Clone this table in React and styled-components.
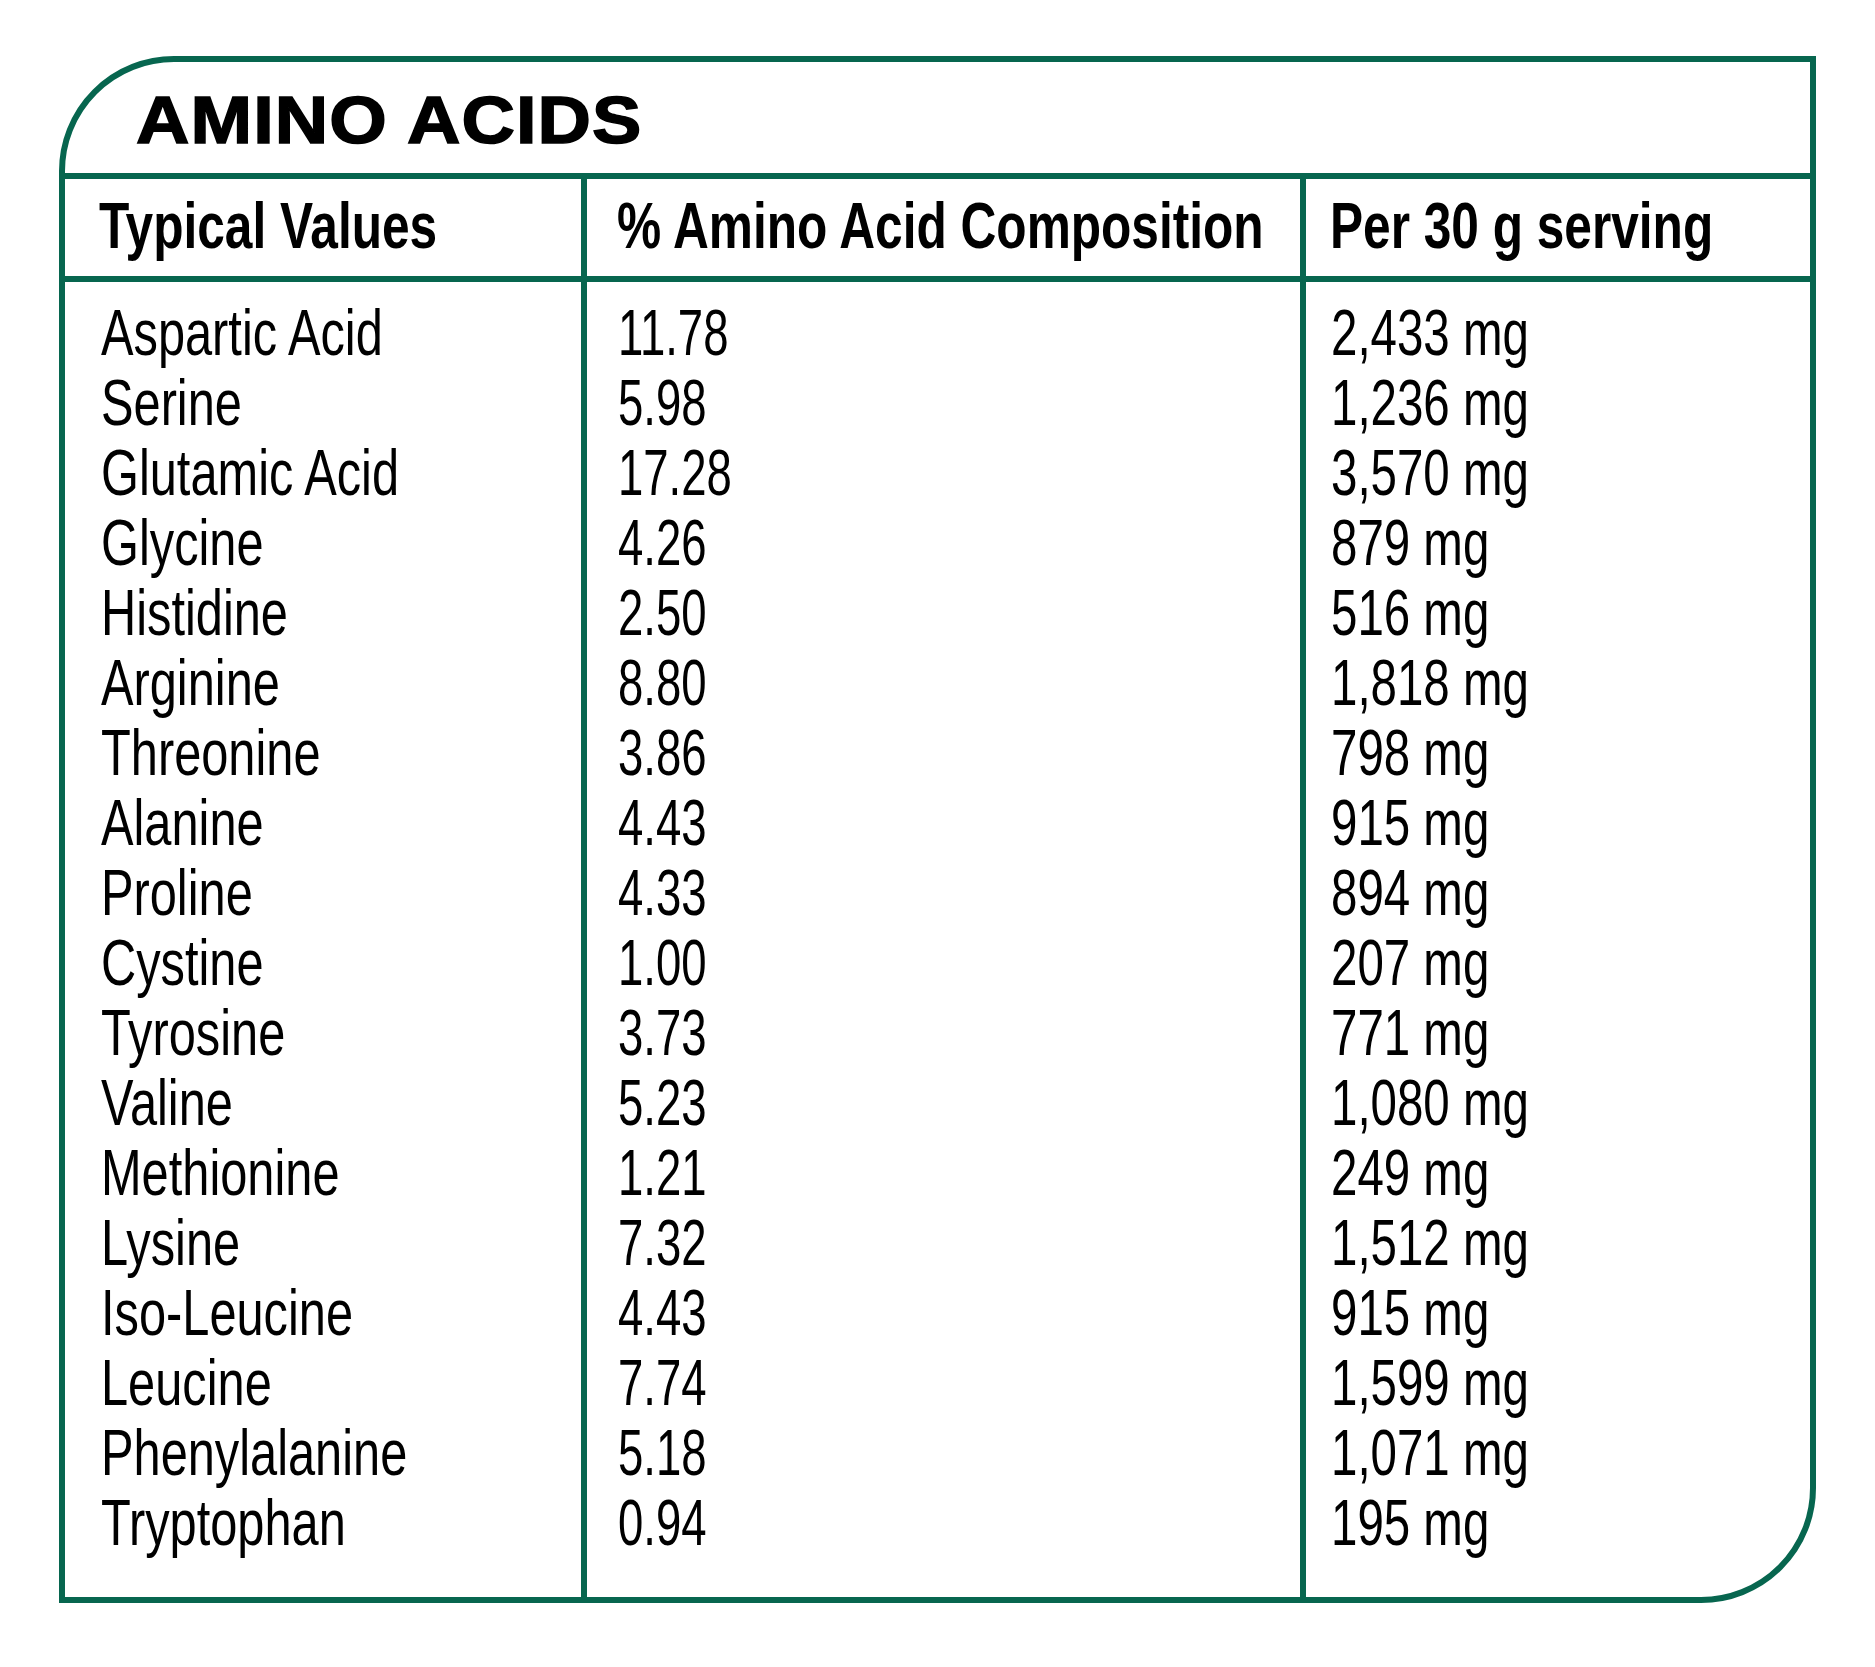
import React from "react";
import styled, { createGlobalStyle } from "styled-components";

const GREEN = "#07664f";

const GlobalStyle = createGlobalStyle`
  html, body {
    margin: 0;
    padding: 0;
    background: #ffffff;
  }

  body {
    font-family: "Liberation Sans", Arial, sans-serif;
    color: #000000;
  }
`;

const Page = styled.div`
  min-height: 1667px;
  padding: 56px 0 0 59px;
  box-sizing: border-box;
`;

const Panel = styled.section`
  width: 1757px;
  box-sizing: border-box;
  border: 6px solid ${GREEN};
  border-radius: 115px 0 115px 0;
  overflow: hidden;
`;

const Title = styled.h2`
  margin: 0;
  padding: 6px 0 0 71px;
  border-bottom: 6px solid ${GREEN};

  font-size: 66px;
  font-weight: 700;
  letter-spacing: 1px;
  line-height: 105px;
  white-space: nowrap;
  -webkit-text-stroke: 1.5px #000000;
`;

const Table = styled.div`
  display: grid;
  grid-template-columns: 522px 719px 504px;
`;

const HeadCell = styled.div`
  border-bottom: 6px solid ${GREEN};
  border-right: ${(props) => (props.$last ? "none" : `6px solid ${GREEN}`)};
  padding: 0 0 3px ${(props) => props.$pad}px;

  font-size: 64px;
  font-weight: 700;
  line-height: 94px;
  white-space: nowrap;
`;

const Column = styled.div`
  border-right: ${(props) => (props.$last ? "none" : `6px solid ${GREEN}`)};
  padding: 16px 0 39px ${(props) => props.$pad}px;

  font-size: 65px;
  font-weight: 400;
  line-height: 70px;
`;

const Line = styled.div`
  height: 70px;
  white-space: nowrap;
`;

// the print face is a condensed sans (and a wide black one for the title),
// so stretch the installed face to its width
const Squeeze = styled.span`
  display: inline-block;
  white-space: nowrap;
  transform: scaleX(${(props) => props.$x});
  transform-origin: left center;
`;

const rows = [
  ["Aspartic Acid", "11.78", "2,433 mg"],
  ["Serine", "5.98", "1,236 mg"],
  ["Glutamic Acid", "17.28", "3,570 mg"],
  ["Glycine", "4.26", "879 mg"],
  ["Histidine", "2.50", "516 mg"],
  ["Arginine", "8.80", "1,818 mg"],
  ["Threonine", "3.86", "798 mg"],
  ["Alanine", "4.43", "915 mg"],
  ["Proline", "4.33", "894 mg"],
  ["Cystine", "1.00", "207 mg"],
  ["Tyrosine", "3.73", "771 mg"],
  ["Valine", "5.23", "1,080 mg"],
  ["Methionine", "1.21", "249 mg"],
  ["Lysine", "7.32", "1,512 mg"],
  ["Iso-Leucine", "4.43", "915 mg"],
  ["Leucine", "7.74", "1,599 mg"],
  ["Phenylalanine", "5.18", "1,071 mg"],
  ["Tryptophan", "0.94", "195 mg"],
];

const headers = [
  { label: "Typical Values", pad: 34 },
  { label: "% Amino Acid Composition", pad: 30 },
  { label: "Per 30 g serving", pad: 24 },
];

const columns = [
  { pad: 36, squeeze: 0.75 },
  { pad: 31, squeeze: 0.7 },
  { pad: 25, squeeze: 0.73 },
];

function App() {
  return (
    <>
      <GlobalStyle />
      <Page>
        <Panel>
          <Title>
            <Squeeze $x={1.12}>AMINO ACIDS</Squeeze>
          </Title>
          <Table>
            {headers.map((h, i) => (
              <HeadCell key={h.label} $pad={h.pad} $last={i === headers.length - 1}>
                <Squeeze $x={0.775}>{h.label}</Squeeze>
              </HeadCell>
            ))}
            {columns.map((c, col) => (
              <Column key={col} $pad={c.pad} $last={col === columns.length - 1}>
                {rows.map((row) => (
                  <Line key={row[0]}>
                    <Squeeze $x={c.squeeze}>{row[col]}</Squeeze>
                  </Line>
                ))}
              </Column>
            ))}
          </Table>
        </Panel>
      </Page>
    </>
  );
}

export default App;
